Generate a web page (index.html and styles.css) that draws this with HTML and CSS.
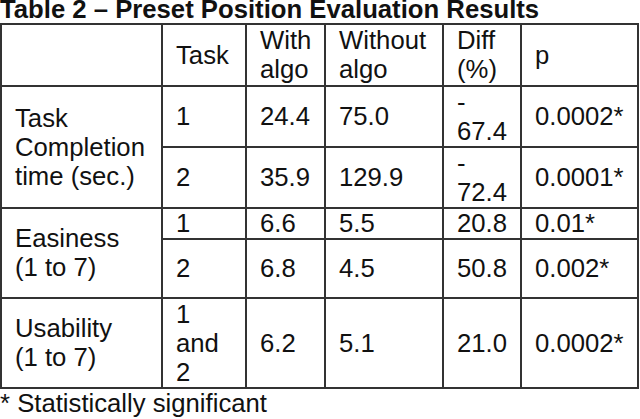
FILE: index.html
```html
<!DOCTYPE html>
<html lang="en">
<head>
    <meta charset="UTF-8">
    <meta name="viewport" content="width=device-width, initial-scale=1.0">
    <title>Preset Position Evaluation Results</title>
    <link rel="stylesheet" href="styles.css">
</head>
<body>
    <h2 class="caption">Table 2 – Preset Position Evaluation Results</h2>

    <table class="results">
        <colgroup>
            <col class="col-measure">
            <col class="col-task">
            <col class="col-with">
            <col class="col-without">
            <col class="col-diff">
            <col class="col-p">
        </colgroup>
        <!-- Header -->
        <tr class="row-head">
            <td></td>
            <td>Task</td>
            <td>With<br>algo</td>
            <td>Without<br>algo</td>
            <td>Diff<br>(%)</td>
            <td>p</td>
        </tr>

        <!-- Task completion time -->
        <tr class="row-time">
            <td rowspan="2">Task<br>Completion<br>time (sec.)</td>
            <td>1</td>
            <td>24.4</td>
            <td>75.0</td>
            <td>-<br>67.4</td>
            <td>0.0002*</td>
        </tr>
        <tr class="row-time">
            <td>2</td>
            <td>35.9</td>
            <td>129.9</td>
            <td>-<br>72.4</td>
            <td>0.0001*</td>
        </tr>

        <!-- Easiness -->
        <tr class="row-easy1">
            <td rowspan="2">Easiness<br>(1 to 7)</td>
            <td>1</td>
            <td>6.6</td>
            <td>5.5</td>
            <td>20.8</td>
            <td>0.01*</td>
        </tr>
        <tr class="row-easy2">
            <td>2</td>
            <td>6.8</td>
            <td>4.5</td>
            <td>50.8</td>
            <td>0.002*</td>
        </tr>

        <!-- Usability -->
        <tr class="row-usab">
            <td>Usability<br>(1 to 7)</td>
            <td>1<br>and<br>2</td>
            <td>6.2</td>
            <td>5.1</td>
            <td>21.0</td>
            <td>0.0002*</td>
        </tr>
    </table>

    <p class="note">* Statistically significant</p>
</body>
</html>
```

FILE: styles.css
```css
body {
    margin: 0;
    padding: 0;
    background-color: #fff;
    color: #111;
    font-family: "Liberation Sans", Arial, sans-serif;
    font-size: 25.7px;
}
.caption {
    margin: -4px 0 0;
    font-size: 25.7px;
    font-weight: bold;
    line-height: 27px;
    white-space: nowrap;
}
.results {
    table-layout: fixed;
    width: 639px;
    border-collapse: collapse;
}
.results td {
    border: 2px solid #333;
    padding: 0 0 0 13px;
    vertical-align: middle;
    line-height: normal;
    white-space: nowrap;
}
.col-measure { width: 161px; }
.col-task { width: 84px; }
.col-with { width: 79px; }
.col-without { width: 118px; }
.col-diff { width: 78px; }
.col-p { width: 117px; }

.row-head { height: 62px; }
.row-time { height: 61px; }
.row-easy1 { height: 31px; }
.row-easy2 { height: 59px; }
.row-usab { height: 90px; }

.note {
    margin: 0;
    line-height: normal;
}
```
